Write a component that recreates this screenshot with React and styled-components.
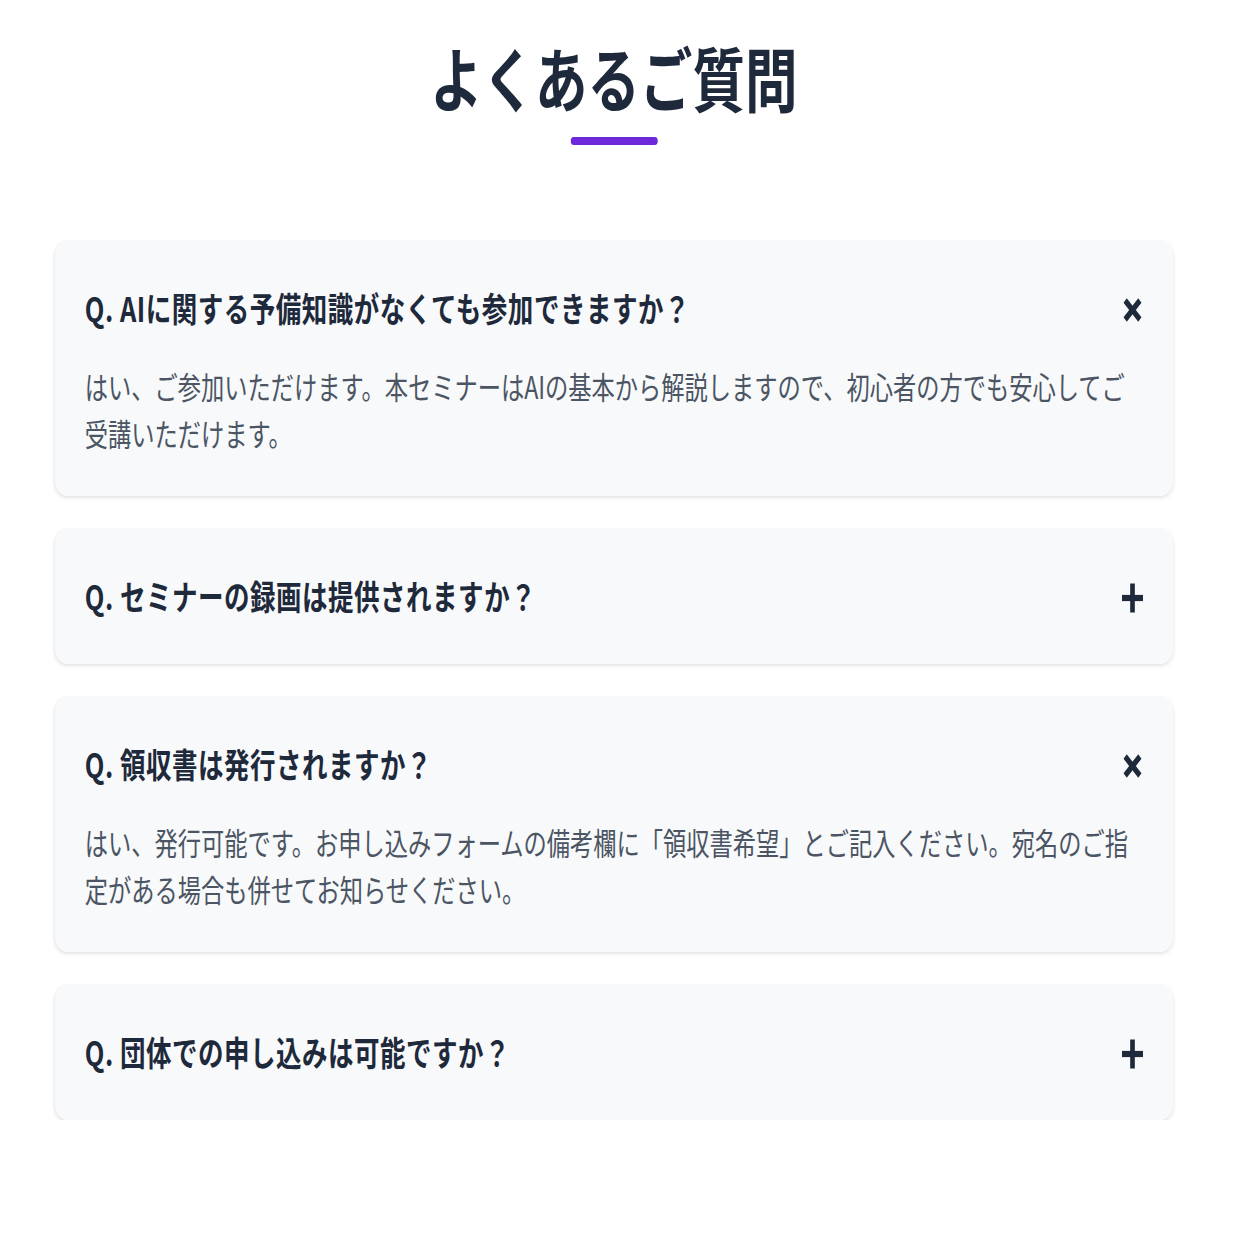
import React, { useState } from 'react'
import styled, { createGlobalStyle } from 'styled-components'

const SCALE = 0.75

const GlobalStyle = createGlobalStyle`
    html, body {
        margin: 0;
        padding: 0;
        background: #ffffff;
        overflow: hidden;
    }
    body {
        font-family: "Noto Sans CJK JP", "Noto Sans", sans-serif;
    }
`

const Stage = styled.div`
    width: ${1256 / SCALE}px;
    transform: scaleX(${SCALE});
    transform-origin: top left;
`

const Section = styled.section`
    width: 1491px;
    margin-left: 73px;
    padding-top: 35px;
    display: flex;
    flex-direction: column;
    align-items: center;
`

const Title = styled.h2`
    margin: 0;
    font-size: 70px;
    line-height: 84px;
    font-weight: 700;
    color: #1e293b;
`

const Underline = styled.span`
    display: block;
    width: 116px;
    height: 8px;
    margin-top: 18px;
    border-radius: 4px;
    background: #6d28d9;
`

const List = styled.div`
    width: 100%;
    margin-top: 95px;
    display: flex;
    flex-direction: column;
    gap: 32px;
`

const Card = styled.div`
    background: #f8f9fa;
    border-radius: 16px;
    padding: 40px;
    box-shadow: 0 3px 6px -1px rgba(15, 23, 42, 0.09), 0 1px 3px rgba(15, 23, 42, 0.05);
`

const QuestionRow = styled.button`
    width: 100%;
    display: flex;
    align-items: center;
    justify-content: space-between;
    padding: 0;
    border: none;
    background: none;
    cursor: pointer;
    text-align: left;
    font-family: inherit;
`

const Question = styled.span`
    font-size: 34px;
    line-height: 56px;
    font-weight: 700;
    letter-spacing: 0.02em;
    color: #1e293b;
`

const Icon = styled.svg`
    flex-shrink: 0;
    width: 28px;
    height: 32px;
    margin-top: 4px;
    color: #1e293b;
`

const Answer = styled.p`
    margin: 26px 0 0;
    font-size: 31px;
    line-height: 47px;
    font-weight: 400;
    color: #4b5563;
`

const faqs = [
    {
        q: 'Q. AIに関する予備知識がなくても参加できますか？',
        a: 'はい、ご参加いただけます。本セミナーはAIの基本から解説しますので、初心者の方でも安心してご受講いただけます。',
    },
    {
        q: 'Q. セミナーの録画は提供されますか？',
        a: 'はい、セミナー終了後に参加者の皆様へ録画データをお送りします。',
    },
    {
        q: 'Q. 領収書は発行されますか？',
        a: 'はい、発行可能です。お申し込みフォームの備考欄に「領収書希望」とご記入ください。宛名のご指定がある場合も併せてお知らせください。',
    },
    {
        q: 'Q. 団体での申し込みは可能ですか？',
        a: 'はい、可能です。団体割引もございますので、お問い合わせフォームよりご相談ください。',
    },
]

const ToggleIcon = ({ open }) => (
    <Icon viewBox="0 0 28 32" fill="none" stroke="currentColor" strokeWidth="6.2">
        {open ? (
            <>
                <line x1="4.2" y1="6.6" x2="23.8" y2="25.4" />
                <line x1="23.8" y1="6.6" x2="4.2" y2="25.4" />
            </>
        ) : (
            <>
                <line x1="0" y1="16" x2="28" y2="16" />
                <line x1="14" y1="1.5" x2="14" y2="30.5" />
            </>
        )}
    </Icon>
)

const FaqItem = ({ item, open, onToggle }) => (
    <Card>
        <QuestionRow onClick={onToggle}>
            <Question>{item.q}</Question>
            <ToggleIcon open={open} />
        </QuestionRow>
        {open && <Answer>{item.a}</Answer>}
    </Card>
)

const App = () => {
    const [opened, setOpened] = useState([0, 2])

    const toggle = (i) => {
        setOpened((prev) => prev.includes(i) ? prev.filter((n) => n !== i) : [...prev, i])
    }

    return (
        <>
            <GlobalStyle />
            <Stage>
                <Section>
                    <Title>よくあるご質問</Title>
                    <Underline />
                    <List>
                        {faqs.map((item, i) => (
                            <FaqItem key={i} item={item} open={opened.includes(i)} onToggle={() => toggle(i)} />
                        ))}
                    </List>
                </Section>
            </Stage>
        </>
    )
}

export default App
